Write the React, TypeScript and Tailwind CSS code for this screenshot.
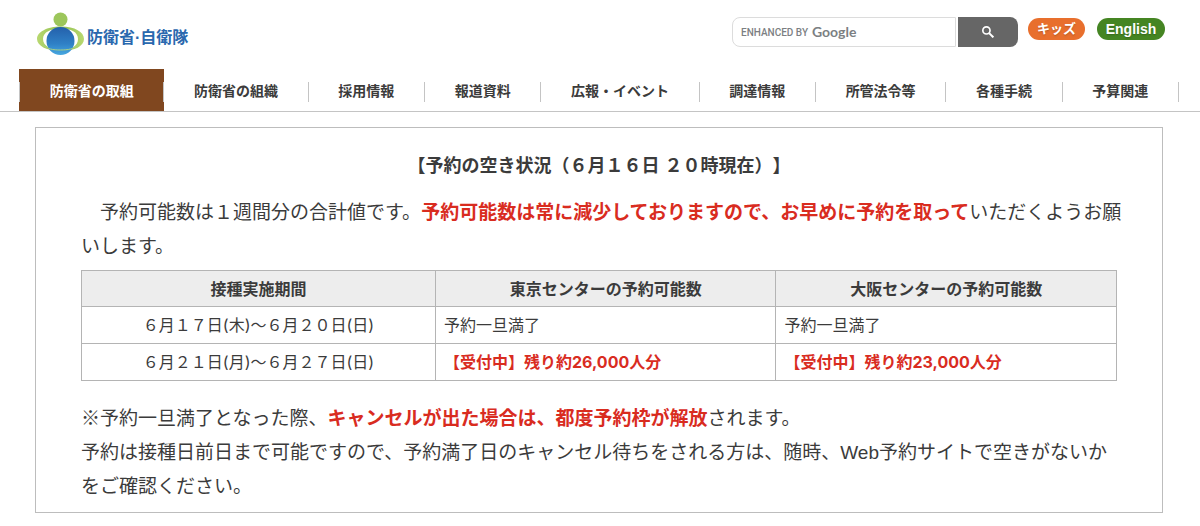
import clsx from 'clsx';

const NAV_ITEMS = [
  '防衛省の取組',
  '防衛省の組織',
  '採用情報',
  '報道資料',
  '広報・イベント',
  '調達情報',
  '所管法令等',
  '各種手続',
  '予算関連',
];

const SLOTS = [
  { period: '６月１７日(木)〜６月２０日(日)', tokyo: '予約一旦満了', osaka: '予約一旦満了', open: false },
  {
    period: '６月２１日(月)〜６月２７日(日)',
    tokyo: '【受付中】残り約26,000人分',
    osaka: '【受付中】残り約23,000人分',
    open: true,
  },
];

function Logo() {
  return (
    <a href="#" className="flex items-center gap-0.5">
      <svg width="48" height="44" viewBox="0 0 48 44" aria-hidden="true">
        <defs>
          <linearGradient id="globe" x1="0" y1="0" x2="0" y2="1">
            <stop offset="0" stopColor="#2460ab" />
            <stop offset="0.6" stopColor="#2f80c6" />
            <stop offset="1" stopColor="#48a8e0" />
          </linearGradient>
          <linearGradient id="ring" x1="0" y1="0" x2="1" y2="0">
            <stop offset="0" stopColor="#b9d870" />
            <stop offset="0.5" stopColor="#8fbf50" />
            <stop offset="1" stopColor="#b9d870" />
          </linearGradient>
        </defs>
        <path
          d="M24 14.500C10 14.500 0 20 0 27s10 12 24 12 23-5 23-12-9-12.500-23-12.500zm0 2c10 0 17 3.500 17 10.500S34 38 24 38 6 34 6 27s8-10.500 18-10.500z"
          fill="url(#ring)"
          fillRule="evenodd"
        />
        <circle cx="23.500" cy="29" r="14" fill="url(#globe)" />
        <path d="M6 33c4 4 10 5 17.500 5S37 37 41 33" fill="none" stroke="#a9d184" strokeWidth="1" />
        <circle cx="23.500" cy="7.500" r="7" fill="#9cc65b" />
      </svg>
      <span className="pt-2 text-[16px] leading-6 font-bold text-[#2a68ae]">防衛省·自衛隊</span>
    </a>
  );
}

function SearchBox() {
  return (
    <form className="flex h-[30px] gap-0.5" onSubmit={(e) => e.preventDefault()}>
      <div className="flex w-56 items-center rounded-l-lg border border-[#dcdcdc] pl-2">
        <label htmlFor="q" className="flex items-center gap-1 whitespace-nowrap text-[#7c7f83]">
          <span className="font-[Roboto] text-[10px] font-medium">ENHANCED BY</span>
          <span className="font-[Lato] text-[14px] leading-5 font-bold">Google</span>
        </label>
        <input id="q" type="text" className="h-full min-w-0 flex-1 px-1 text-sm outline-none" />
      </div>
      <button
        type="submit"
        aria-label="検索"
        className="flex w-[60px] items-center justify-center rounded-r-lg bg-[#666] text-white"
      >
        <svg width="12" height="12" viewBox="0 0 13 13" fill="none" stroke="currentColor" aria-hidden="true">
          <circle cx="4.800" cy="4.800" r="3.900" strokeWidth="1.800" />
          <path d="M7.700 7.700L12.300 12.300" strokeWidth="2.200" />
        </svg>
      </button>
    </form>
  );
}

export default function App() {
  return (
    <div className="bg-white font-['Liberation_Sans','Noto_Sans_CJK_JP',sans-serif] text-[#3b3b3b]">
      <header className="flex items-start justify-between pt-3 pr-[35px] pl-[37px]">
        <Logo />
        <div className="flex items-start pt-[5px]">
          <SearchBox />
          <a
            href="#"
            className="mt-px ml-2.5 flex h-[22px] w-[57px] items-center justify-center rounded-full bg-[#e86f2d] text-[13px] font-bold text-white text-shadow-sm"
          >
            キッズ
          </a>
          <a
            href="#"
            className="mt-px ml-3 flex h-[22px] w-[68px] items-center justify-center rounded-full bg-[#458523] text-[14px] font-bold text-white text-shadow-sm"
          >
            English
          </a>
        </div>
      </header>

      <nav className="mt-[13px] border-b border-[#c4c4c4] pr-[21px] pl-[19px]">
        <ul className="flex">
          {NAV_ITEMS.map((item, i) => (
            <li
              key={item}
              className={clsx('flex h-[42px] flex-auto items-center pt-[3px]', i === 0 && 'bg-[#80471f] text-white')}
            >
              <a
                href="#"
                className={clsx(
                  'flex h-5 flex-1 items-center justify-center border-r px-7 text-[14px] font-bold whitespace-nowrap',
                  i === 0 ? 'border-l border-[#c4c4c4]' : 'border-[#c4c4c4]'
                )}
              >
                {item}
              </a>
            </li>
          ))}
        </ul>
      </nav>

      <main className="mt-[15px] mr-[37px] mb-3 ml-[35px] border border-[#bdbdbd] px-[45px] pt-5 pb-2 [text-spacing-trim:space-all]">
        <h1 className="text-center text-[18px] leading-9 font-bold">【予約の空き状況（６月１６日 ２０時現在）】</h1>

        <p className="mt-3 -mr-5 text-[19px] leading-[34px]">
          {'\u3000'}予約可能数は１週間分の合計値です。
          <strong className="text-[#d92c1f]">予約可能数は常に減少しておりますので、お早めに予約を取って</strong>
          いただくようお願
          <br />
          いします。
        </p>

        <table className="mt-1.5 w-full table-fixed border-collapse font-[Inter,'Noto_Sans_CJK_JP',sans-serif] text-[16px] leading-5">
          <thead>
            <tr className="h-9 bg-[#ededed]">
              <th className="w-[34.2%] border border-[#b4b4b4]">接種実施期間</th>
              <th className="border border-[#b4b4b4]">東京センターの予約可能数</th>
              <th className="border border-[#b4b4b4]">大阪センターの予約可能数</th>
            </tr>
          </thead>
          <tbody>
            {SLOTS.map((slot) => (
              <tr key={slot.period} className="h-[37px]">
                <td className="border border-[#b4b4b4] text-center">{slot.period}</td>
                <td className={clsx('border border-[#b4b4b4] px-2', slot.open && 'font-bold text-[#d92c1f]')}>
                  {slot.tokyo}
                </td>
                <td className={clsx('border border-[#b4b4b4] px-2', slot.open && 'font-bold text-[#d92c1f]')}>
                  {slot.osaka}
                </td>
              </tr>
            ))}
          </tbody>
        </table>

        <p className="mt-[21px] -mr-5 text-[19px] leading-[34px]">
          ※予約一旦満了となった際、
          <strong className="text-[#d92c1f]">キャンセルが出た場合は、都度予約枠が解放</strong>
          されます。
          <br />
          予約は接種日前日まで可能ですので、予約満了日のキャンセル待ちをされる方は、随時、Web予約サイトで空きがないか
          <br />
          をご確認ください。
        </p>
      </main>
    </div>
  );
}
